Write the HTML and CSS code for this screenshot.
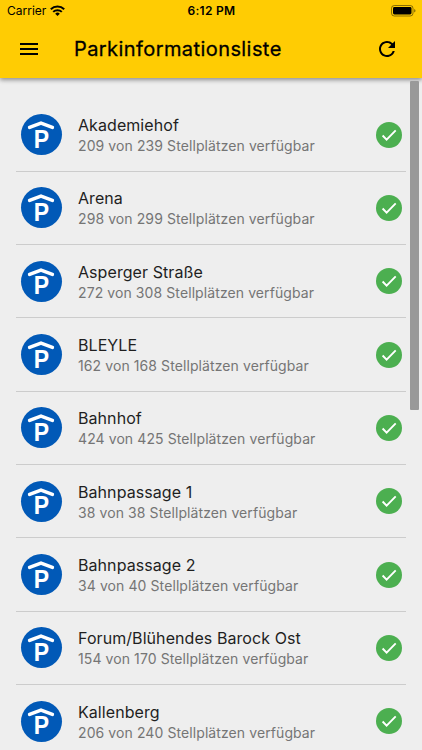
FILE: index.html
```
<!DOCTYPE html>
<html lang="de">
<head>
<meta charset="utf-8">
<title>Parkinformationsliste</title>
<link rel="stylesheet" href="styles.css">
</head>
<body>
<header class="header">
  <div class="status">
    <div class="status-left">
      <span class="carrier">Carrier</span>
      <svg class="wifi" viewBox="0 0 15 11"><g fill="none" stroke="#000" stroke-width="2"><path d="M.8 4.300a9.600 9.600 0 0 1 13.400 0"/><path d="M3.200 6.900a6.100 6.100 0 0 1 8.600 0"/></g><path d="M7.500 11 5.200 8.700a3.300 3.300 0 0 1 4.600 0z"/></svg>
    </div>
    <span class="time">6:12 PM</span>
    <svg class="battery" viewBox="0 0 25 12"><rect x=".5" y=".5" width="21.500" height="10.500" rx="2.800" fill="none" stroke="#000" stroke-opacity=".45"/><rect x="2" y="2" width="18.500" height="7.500" rx="1.400"/><path d="M23.200 4v3.600q1.300-.6 1.300-1.800T23.200 4z" fill-opacity=".5"/></svg>
  </div>
  <div class="toolbar">
    <svg class="menu" viewBox="0 0 24 24"><path d="M3 18h18v-2H3v2zm0-5h18v-2H3v2zm0-7v2h18V6H3z"/></svg>
    <h1 class="title">Parkinformationsliste</h1>
    <svg class="refresh" viewBox="0 0 24 24"><path d="M17.650 6.350A7.958 7.958 0 0 0 12 4c-4.420 0-7.990 3.580-7.990 8s3.570 8 7.990 8c3.730 0 6.840-2.550 7.730-6h-2.080A5.990 5.990 0 0 1 12 18c-3.310 0-6-2.690-6-6s2.690-6 6-6c1.660 0 3.140.69 4.220 1.780L13 11h7V4l-2.350 2.350z"/></svg>
  </div>
</header>
<main class="list">
  <div class="row"><div class="garage"><svg class="roof" viewBox="0 0 28 9"><path d="M2.600 6.400 14 2.200l11.400 4.200"/></svg><span class="letter">P</span></div><div class="info"><div class="name">Akademiehof</div><div class="free">209 von 239 Stellplätzen verfügbar</div></div><svg class="check" viewBox="0 0 26 26"><path d="M6.600 13.500l4 4.100 9.100-9.200"/></svg></div>
  <div class="row"><div class="garage"><svg class="roof" viewBox="0 0 28 9"><path d="M2.600 6.400 14 2.200l11.400 4.200"/></svg><span class="letter">P</span></div><div class="info"><div class="name">Arena</div><div class="free">298 von 299 Stellplätzen verfügbar</div></div><svg class="check" viewBox="0 0 26 26"><path d="M6.600 13.500l4 4.100 9.100-9.200"/></svg></div>
  <div class="row"><div class="garage"><svg class="roof" viewBox="0 0 28 9"><path d="M2.600 6.400 14 2.200l11.400 4.200"/></svg><span class="letter">P</span></div><div class="info"><div class="name">Asperger Straße</div><div class="free">272 von 308 Stellplätzen verfügbar</div></div><svg class="check" viewBox="0 0 26 26"><path d="M6.600 13.500l4 4.100 9.100-9.200"/></svg></div>
  <div class="row"><div class="garage"><svg class="roof" viewBox="0 0 28 9"><path d="M2.600 6.400 14 2.200l11.400 4.200"/></svg><span class="letter">P</span></div><div class="info"><div class="name">BLEYLE</div><div class="free">162 von 168 Stellplätzen verfügbar</div></div><svg class="check" viewBox="0 0 26 26"><path d="M6.600 13.500l4 4.100 9.100-9.200"/></svg></div>
  <div class="row"><div class="garage"><svg class="roof" viewBox="0 0 28 9"><path d="M2.600 6.400 14 2.200l11.400 4.200"/></svg><span class="letter">P</span></div><div class="info"><div class="name">Bahnhof</div><div class="free">424 von 425 Stellplätzen verfügbar</div></div><svg class="check" viewBox="0 0 26 26"><path d="M6.600 13.500l4 4.100 9.100-9.200"/></svg></div>
  <div class="row"><div class="garage"><svg class="roof" viewBox="0 0 28 9"><path d="M2.600 6.400 14 2.200l11.400 4.200"/></svg><span class="letter">P</span></div><div class="info"><div class="name">Bahnpassage 1</div><div class="free">38 von 38 Stellplätzen verfügbar</div></div><svg class="check" viewBox="0 0 26 26"><path d="M6.600 13.500l4 4.100 9.100-9.200"/></svg></div>
  <div class="row"><div class="garage"><svg class="roof" viewBox="0 0 28 9"><path d="M2.600 6.400 14 2.200l11.400 4.200"/></svg><span class="letter">P</span></div><div class="info"><div class="name">Bahnpassage 2</div><div class="free">34 von 40 Stellplätzen verfügbar</div></div><svg class="check" viewBox="0 0 26 26"><path d="M6.600 13.500l4 4.100 9.100-9.200"/></svg></div>
  <div class="row"><div class="garage"><svg class="roof" viewBox="0 0 28 9"><path d="M2.600 6.400 14 2.200l11.400 4.200"/></svg><span class="letter">P</span></div><div class="info"><div class="name">Forum/Blühendes Barock Ost</div><div class="free">154 von 170 Stellplätzen verfügbar</div></div><svg class="check" viewBox="0 0 26 26"><path d="M6.600 13.500l4 4.100 9.100-9.200"/></svg></div>
  <div class="row"><div class="garage"><svg class="roof" viewBox="0 0 28 9"><path d="M2.600 6.400 14 2.200l11.400 4.200"/></svg><span class="letter">P</span></div><div class="info"><div class="name">Kallenberg</div><div class="free">206 von 240 Stellplätzen verfügbar</div></div><svg class="check" viewBox="0 0 26 26"><path d="M6.600 13.500l4 4.100 9.100-9.200"/></svg></div>
</main>
<div class="scrollbar"></div>
</body>
</html>
```
FILE: styles.css
```
* { box-sizing: border-box; }
body {
  margin: 0;
  height: 750px;
  overflow: hidden;
  position: relative;
  background: #eee;
  font-family: Inter, "Liberation Sans", sans-serif;
}
.header {
  height: 78px;
  background: #ffcc03;
  position: relative;
  box-shadow: 0 2px 4px rgba(0, 0, 0, .3), 0 1px 6px rgba(0, 0, 0, .16);
}
.status {
  height: 21px;
  padding: 0 6px 0 7px;
  display: grid;
  grid-template-columns: 1fr auto 1fr;
  align-items: center;
  font-size: 12px;
  line-height: 21px;
}
.status-left { display: flex; align-items: center; gap: 4px; }
.carrier { letter-spacing: 0; }
.wifi { width: 15px; height: 11px; }
.time { font-weight: 600; letter-spacing: .3px; }
.battery { width: 25px; height: 12px; justify-self: end; }
.toolbar { height: 56px; display: flex; align-items: center; padding: 0 23px 0 17px; }
.menu, .refresh { width: 24px; height: 24px; flex: none; }
.title {
  flex: 1;
  margin: 0 0 0 33px;
  font-size: 20px;
  line-height: 28px;
  font-weight: 400;
  letter-spacing: .42px;
  -webkit-text-stroke: .3px #000;
}
.list { padding: 20.300px 16px 0; }
.row {
  height: 73.330px;
  display: flex;
  align-items: center;
  padding: .4px 4px 0;
  border-bottom: 1px solid #ccc;
}
.garage {
  width: 41px;
  height: 41px;
  margin-left: .5px;
  flex: none;
  display: flex;
  flex-direction: column;
  align-items: center;
  padding-top: 7px;
  border-radius: 50%;
  background: #0159b7;
}
.roof {
  width: 28px;
  height: 9px;
  flex: none;
  fill: none;
  stroke: #fff;
  stroke-width: 3.500;
  stroke-linecap: round;
}
.letter {
  font: 700 25px/24px "Liberation Sans", sans-serif;
  color: #fff;
  margin: -3.500px 0 0 1.500px;
  transform: scaleX(.92);
}
.info { flex: 1; margin-left: 16.500px; padding-top: .8px; white-space: nowrap; }
.name { font-size: 16px; line-height: 22px; letter-spacing: .07px; color: #1f1f1f; }
.free { font-size: 14px; line-height: 20px; letter-spacing: .09px; color: #757575; }
.check {
  width: 26px;
  height: 26px;
  flex: none;
  border-radius: 50%;
  background: #4caf50;
  fill: none;
  stroke: #fff;
  stroke-width: 1.900;
}
.scrollbar {
  position: absolute;
  top: 81px;
  right: 3px;
  width: 9px;
  height: 329px;
  border-radius: 1px;
  background: #999;
}
```
